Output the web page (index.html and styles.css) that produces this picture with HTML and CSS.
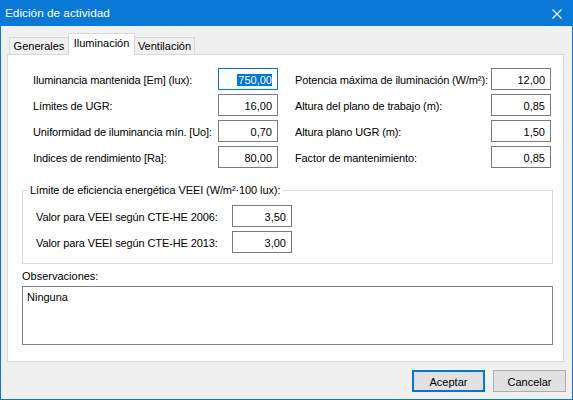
FILE: index.html
```html
<!DOCTYPE html>
<html lang="es">
<head>
<meta charset="utf-8">
<title>Edición de actividad</title>
<link rel="stylesheet" href="styles.css">
</head>
<body>
<div class="window">
  <div class="titlebar">
    <span class="title">Edición de actividad</span>
    <svg class="close" width="10" height="10" viewBox="0 0 10 10"><path d="M0.5 0.5 L9.5 9.5 M9.5 0.5 L0.5 9.5" stroke="#fff" stroke-width="1.1" fill="none"/></svg>
  </div>
  <div class="content">
    <div class="tabs">
      <div class="tab t1">Generales</div>
      <div class="tab active">Iluminación</div>
      <div class="tab t3">Ventilación</div>
    </div>
    <div class="panel">
      <div class="fields">
        <div class="label">Iluminancia mantenida [Em] (lux):</div>
        <div class="box focus"><span class="sel">750,00</span></div>
        <div class="label">Potencia máxima de iluminación (W/m²):</div>
        <div class="box">12,00</div>

        <div class="label">Límites de UGR:</div>
        <div class="box">16,00</div>
        <div class="label">Altura del plano de trabajo (m):</div>
        <div class="box">0,85</div>

        <div class="label">Uniformidad de iluminancia mín. [Uo]:</div>
        <div class="box">0,70</div>
        <div class="label">Altura plano UGR (m):</div>
        <div class="box">1,50</div>

        <div class="label">Indices de rendimiento [Ra]:</div>
        <div class="box">80,00</div>
        <div class="label">Factor de mantenimiento:</div>
        <div class="box">0,85</div>
      </div>
      <div class="group">
        <div class="legend">Límite de eficiencia energética VEEI (W/m²·100 lux):</div>
        <div class="group-rows">
          <div class="label">Valor para VEEI según CTE-HE 2006:</div>
          <div class="box">3,50</div>
          <div class="label">Valor para VEEI según CTE-HE 2013:</div>
          <div class="box">3,00</div>
        </div>
      </div>
      <div class="obs-label">Observaciones:</div>
      <div class="textarea">Ninguna</div>
    </div>
    <div class="buttons">
      <div class="btn default">Aceptar</div>
      <div class="btn">Cancelar</div>
    </div>
  </div>
</div>
</body>
</html>
```
FILE: styles.css
```css
* { box-sizing: border-box; }
html, body { margin: 0; padding: 0; }
body {
  font-family: "Liberation Sans", Arial, sans-serif;
  font-size: 11px;
  color: #000;
  background: #fff;
}
.window {
  width: 573px;
  height: 400px;
  border: 1px solid #0a78d7;
  background: #f0f0f0;
  display: flex;
  flex-direction: column;
}
.titlebar {
  height: 25px;
  background: #0a78d7;
  color: #fff;
  display: flex;
  align-items: center;
  justify-content: space-between;
  padding: 0 10px 1px 4px;
  font-size: 11.8px;
}
.close { display: block; margin-top: 1px; }
.content {
  padding-top: 7px;
  display: flex;
  flex-direction: column;
}
.tabs {
  display: flex;
  align-items: flex-end;
  height: 21px;
  margin-left: 8px;
  position: relative;
  z-index: 1;
}
.tab {
  height: 17px;
  border: 1px solid #d9d9d9;
  border-bottom: none;
  background: #f0f0f0;
  display: flex;
  align-items: center;
  justify-content: center;
  line-height: 15px;
  padding-top: 1px;
  white-space: nowrap;
}
.t1 { width: 59px; border-right: none; }
.t3 { width: 60px; border-left: none; }
.tab.active {
  width: 67px;
  height: 22px;
  margin-bottom: -1px;
  background: #fff;
  padding-top: 0;
  padding-bottom: 3px;
}
.panel {
  margin-left: 6px;
  width: 557px;
  height: 308px;
  background: #fff;
  border: 1px solid #d9d9d9;
  display: flex;
  flex-direction: column;
}
.fields {
  margin-top: 13px;
  padding-left: 25px;
  display: grid;
  grid-template-columns: 185px 60px 213px 60px;
  grid-auto-rows: 22px;
  row-gap: 4px;
}
.fields > .label:nth-child(4n+3) { margin-left: 17px; }
.label {
  display: flex;
  align-items: center;
  white-space: nowrap;
  padding-top: 1px;
  letter-spacing: -0.12px;
}
.box {
  height: 22px;
  border: 1px solid #7a7a7a;
  background: #fff;
  display: flex;
  align-items: center;
  justify-content: flex-end;
  padding-right: 5px;
  padding-top: 1px;
}
.box.focus { border-color: #0078d7; }
.sel {
  background: #0078d7;
  color: #fff;
  line-height: 12px;
  height: 12px;
  display: inline-flex;
  align-items: center;
  padding-left: 1px;
}
.group {
  position: relative;
  margin-top: 22px;
  margin-left: 14px;
  width: 531px;
  height: 74px;
  border: 1px solid #dcdcdc;
}
.legend {
  position: absolute;
  top: -9px;
  left: 5px;
  padding: 0 2px;
  background: #fff;
  line-height: 16px;
  white-space: nowrap;
  letter-spacing: -0.1px;
}
.group-rows {
  padding: 14px 0 0 13px;
  display: grid;
  grid-template-columns: 196px 60px;
  grid-auto-rows: 22px;
  row-gap: 4px;
}
.obs-label {
  margin: 5px 0 0 14px;
  line-height: 15px;
  height: 15px;
}
.textarea {
  margin: 2px 0 0 14px;
  width: 531px;
  height: 59px;
  border: 1px solid #828282;
  padding: 3px 4px;
  line-height: 15px;
}
.buttons {
  display: flex;
  justify-content: flex-end;
  gap: 8px;
  margin-top: 8px;
  padding-right: 6px;
}
.btn {
  width: 73px;
  height: 22px;
  border: 1px solid #adadad;
  background: #e1e1e1;
  display: flex;
  align-items: center;
  justify-content: center;
  padding-top: 1px;
}
.btn.default { border: 2px solid #0078d7; }
```
